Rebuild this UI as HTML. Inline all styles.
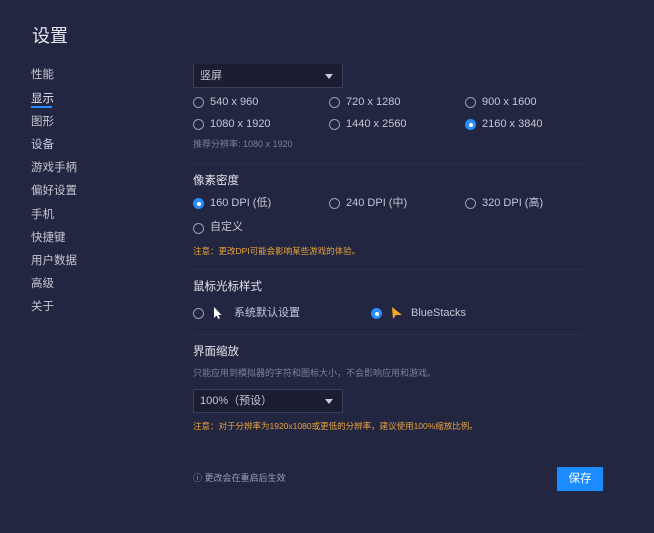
<!DOCTYPE html>
<html><head><meta charset="utf-8"><style>
*{margin:0;padding:0;box-sizing:border-box}
body{width:654px;height:533px;background:#232641;font-family:"Liberation Sans","Noto Sans CJK SC",sans-serif;color:#c9cbd8;position:relative;overflow:hidden}
.a{position:absolute;white-space:nowrap;line-height:1}
.nav{left:31px;font-size:11.5px;color:#c4c6d2}
.sep{position:absolute;left:170px;top:66px;width:1px;height:467px;background:#262a45}
.hr{position:absolute;left:193px;width:390px;height:1px;background:#2b2f4b}
.r{position:absolute;width:11px;height:11px;border:1.3px solid #9a9db0;border-radius:50%}
.r.on{border:none;background:#2a8cff}
.r.on::after{content:"";position:absolute;left:3.5px;top:3.5px;width:4px;height:4px;background:#fff;border-radius:50%}
.t{font-size:11px;color:#c4c6d4}
.h{font-size:11.5px;color:#e2e3ea}
.s{font-size:9px;color:#7c8098}
.o{font-size:8.5px;color:#e8a33a}
.dd{position:absolute;left:193px;width:150px;background:#1b1d33;border:1px solid #3a3e5a}
.dd span{position:absolute;right:9px;top:50%;margin-top:-2px;border-left:4px solid transparent;border-right:4px solid transparent;border-top:5px solid #c9cbd8}
</style></head><body>
<div class="a" style="left:32px;top:27px;font-size:18px;color:#e6e7ee">设置</div>
<div class="a nav" style="top:70px">性能</div>
<div class="a nav" style="top:94px;color:#e6e7ee">显示</div>
<div style="position:absolute;left:31px;top:106px;width:21px;height:2px;background:#2a8cff"></div>
<div class="a nav" style="top:117px">图形</div>
<div class="a nav" style="top:140px">设备</div>
<div class="a nav" style="top:163px">游戏手柄</div>
<div class="a nav" style="top:186px">偏好设置</div>
<div class="a nav" style="top:210px">手机</div>
<div class="a nav" style="top:233px">快捷键</div>
<div class="a nav" style="top:256px">用户数据</div>
<div class="a nav" style="top:279px">高级</div>
<div class="a nav" style="top:302px">关于</div>
<div class="sep"></div>

<div class="dd" style="top:64px;height:24px;border-top:none"><div class="a t" style="left:6px;top:7px">竖屏</div><span></span></div>

<div class="r" style="left:193px;top:97px"></div><div class="a t" style="left:210px;top:97px">540 x 960</div>
<div class="r" style="left:329px;top:97px"></div><div class="a t" style="left:346px;top:97px">720 x 1280</div>
<div class="r" style="left:465px;top:97px"></div><div class="a t" style="left:482px;top:97px">900 x 1600</div>
<div class="r" style="left:193px;top:119px"></div><div class="a t" style="left:210px;top:119px">1080 x 1920</div>
<div class="r" style="left:329px;top:119px"></div><div class="a t" style="left:346px;top:119px">1440 x 2560</div>
<div class="r on" style="left:465px;top:119px"></div><div class="a t" style="left:482px;top:119px">2160 x 3840</div>
<div class="a s" style="left:193px;top:140px">推荐分辨率: 1080 x 1920</div>
<div class="hr" style="top:163px"></div>

<div class="a h" style="left:193px;top:176px">像素密度</div>
<div class="r on" style="left:193px;top:198px"></div><div class="a t" style="left:210px;top:198px">160 DPI (低)</div>
<div class="r" style="left:329px;top:198px"></div><div class="a t" style="left:346px;top:198px">240 DPI (中)</div>
<div class="r" style="left:465px;top:198px"></div><div class="a t" style="left:482px;top:198px">320 DPI (高)</div>
<div class="r" style="left:193px;top:223px"></div><div class="a t" style="left:210px;top:222px">自定义</div>
<div class="a o" style="left:193px;top:247px">注意：更改DPI可能会影响某些游戏的体验。</div>
<div class="hr" style="top:269px"></div>

<div class="a h" style="left:193px;top:282px">鼠标光标样式</div>
<div class="r" style="left:193px;top:308px"></div>
<svg style="position:absolute;left:213px;top:306px" width="10" height="14" viewBox="0 0 10 14"><path d="M1 1 L1 12 L3.5 9.5 L5.5 13 L7 12.3 L5.2 9 L8.5 9 Z" fill="#fff"/></svg>
<div class="a t" style="left:234px;top:308px">系统默认设置</div>
<div class="r on" style="left:371px;top:308px"></div>
<svg style="position:absolute;left:391px;top:306px" width="12" height="14" viewBox="0 0 12 14"><path d="M1 1 L11 9 L5 9 L2 13 Z" fill="#f5a623"/></svg>
<div class="a t" style="left:411px;top:308px">BlueStacks</div>
<div class="hr" style="top:334px"></div>

<div class="a h" style="left:193px;top:347px">界面缩放</div>
<div class="a s" style="left:193px;top:369px">只能应用到模拟器的字符和图标大小，不会影响应用和游戏。</div>
<div class="dd" style="top:389px;height:24px"><div class="a t" style="left:6px;top:6px">100%（预设）</div><span></span></div>
<div class="a o" style="left:193px;top:422px">注意：对于分辨率为1920x1080或更低的分辨率，建议使用100%缩放比例。</div>

<div class="a s" style="left:193px;top:474px;color:#9da0b3">ⓘ 更改会在重启后生效</div>
<div style="position:absolute;left:557px;top:467px;width:46px;height:24px;background:#1a8cff;color:#fff;font-size:11.5px;text-align:center;line-height:24px">保存</div>
</body></html>
